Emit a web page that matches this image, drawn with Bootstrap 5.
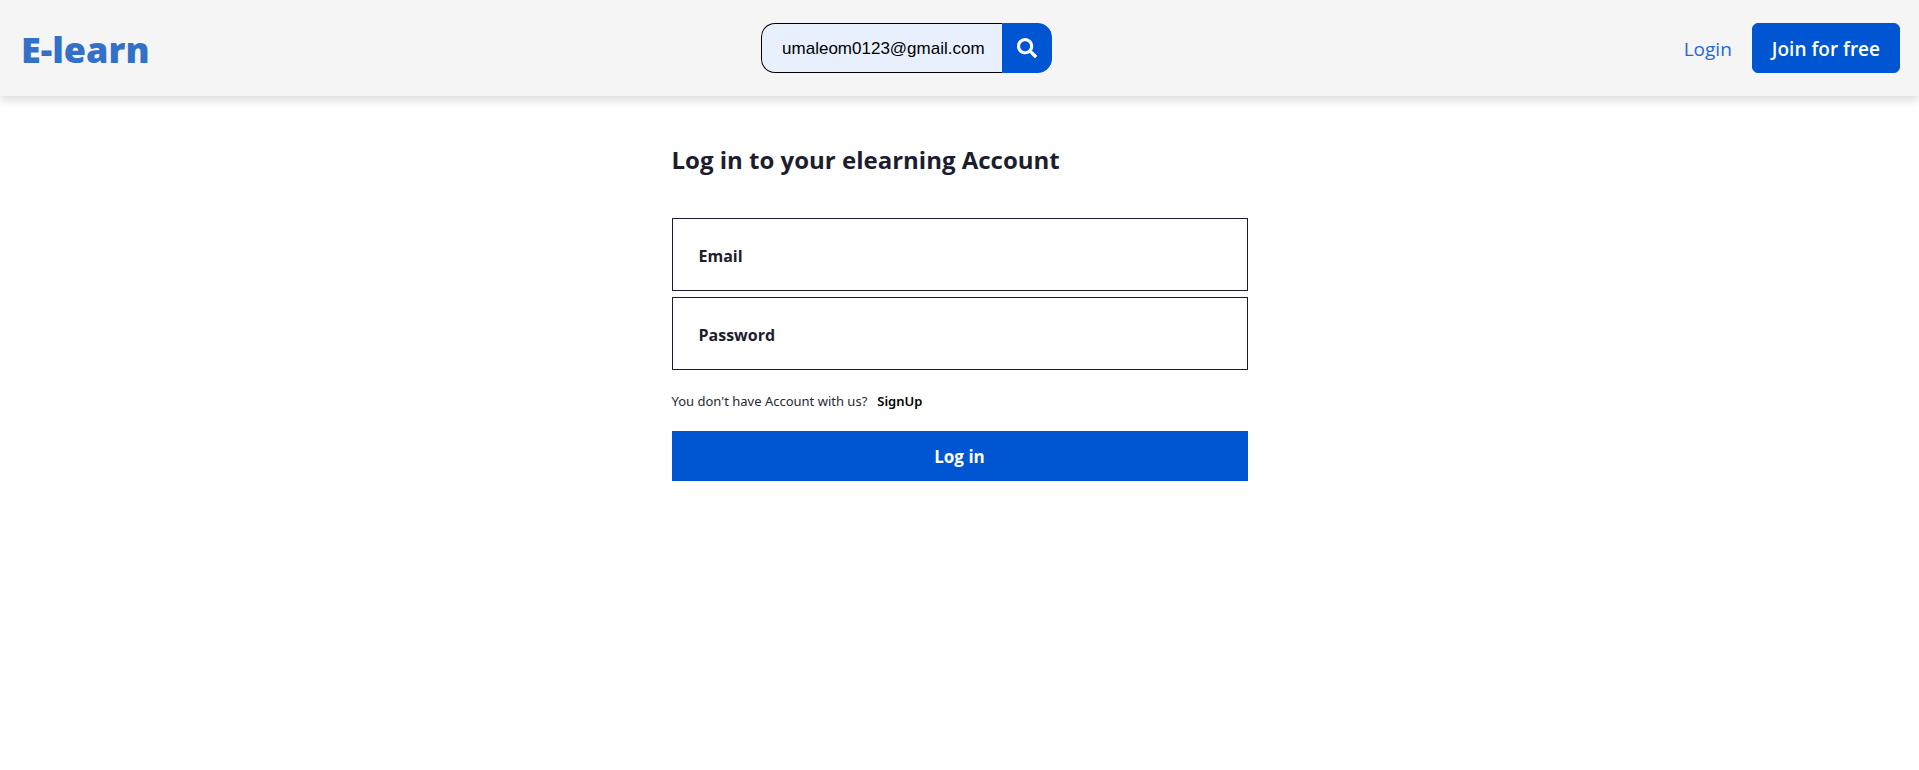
<!DOCTYPE html>
<html lang="en">
<head>
<meta charset="utf-8">
<meta name="viewport" content="width=device-width, initial-scale=1">
<title>E-learn | Log in</title>
<link href="https://cdn.jsdelivr.net/npm/bootstrap@5.3.0/dist/css/bootstrap.min.css" rel="stylesheet">
<style>
  :root { --brand: #0056d2; --ink: #1c1d2f; }
  body { font-family: "Segoe UI", "Open Sans", "Noto Sans", sans-serif; color: #1f2937; }
  .site-header { min-height: 96px; padding: 0 19px 0 21px; background: #f5f5f5; box-shadow: 0 4px 10px rgba(0, 0, 0, .15); }
  .brand { padding-top: 4px; font-size: 36px; font-weight: 800; line-height: 40px; color: #3370c8; }
  .search-input { width: 241px; height: 50px; padding: 2px 10px 0 20px; border: 1px solid #000; border-right: 0; border-radius: 14px 0 0 14px; background: #e8f0fe; color: #000; font: 17px "Liberation Sans", Arial, sans-serif; }
  .search-btn { width: 50px; height: 50px; border-radius: 0 14px 14px 0; }
  .brand-btn { --bs-btn-color: #fff; --bs-btn-bg: var(--brand); --bs-btn-border-color: var(--brand); --bs-btn-hover-color: #fff; --bs-btn-hover-bg: #00419e; --bs-btn-hover-border-color: #00419e; }
  .login-link { padding: 2px 20px 0; font-size: 19px; color: #2468d6; }
  .join-btn { height: 50px; padding: 2px 19px 0; font-size: 19px; font-weight: 600; border-radius: 6px; }
  .login-form { max-width: 576px; padding-top: 46px; }
  .login-title { margin-bottom: 40px; font-size: 24px; line-height: 36px; font-weight: 700; color: var(--ink); }
  .field { height: 73px; padding: 2px 26px 0; margin-bottom: 6px; border: 1px solid var(--ink); }
  .field label { font-size: 16px; font-weight: 700; color: var(--ink); }
  .field input { min-width: 0; height: 100%; outline: 0; }
  .field:focus-within { border-color: var(--brand); }
  .signup-line { margin: 21px 0 19px; font-family: "Segoe UI", "Noto Sans", sans-serif; font-size: 13px; line-height: 21px; }
  .signup-line a { margin-left: 10px; font-weight: 600; color: #000; }
  .submit-btn { height: 50px; padding: 2px 0 0; font-size: 17px; font-weight: 700; }
</style>
</head>
<body>
<header class="site-header d-flex flex-wrap align-items-center justify-content-between">
  <a class="brand text-decoration-none" href="#">E-learn</a>
  <form class="d-flex" role="search">
    <input class="search-input" type="text" aria-label="Search" value="umaleom0123@gmail.com">
    <button class="btn brand-btn search-btn p-0 d-flex align-items-center justify-content-center" type="button" aria-label="Search">
      <svg width="20" height="20" viewBox="0 0 512 512" fill="currentColor" aria-hidden="true"><path d="M505 442.700 405.300 343c-4.500-4.500-10.600-7-17-7H372c27.600-35.300 44-79.700 44-128C416 93.100 322.900 0 208 0S0 93.100 0 208s93.100 208 208 208c48.300 0 92.700-16.400 128-44v16.300c0 6.400 2.500 12.500 7 17l99.700 99.700c9.400 9.400 24.600 9.400 33.900 0l28.300-28.300c9.400-9.400 9.400-24.600.1-34zM208 336c-70.700 0-128-57.200-128-128 0-70.700 57.200-128 128-128 70.700 0 128 57.200 128 128 0 70.700-57.200 128-128 128z"/></svg>
    </button>
  </form>
  <div class="d-flex align-items-center">
    <a class="login-link text-decoration-none" href="#">Login</a>
    <button class="btn brand-btn join-btn" type="button">Join for free</button>
  </div>
</header>
<main>
  <form class="login-form mx-auto">
    <h1 class="login-title">Log in to your elearning Account</h1>
    <div class="field d-flex align-items-center">
      <label for="email">Email</label>
      <input class="flex-fill border-0 bg-transparent" type="email" id="email">
    </div>
    <div class="field d-flex align-items-center">
      <label for="password">Password</label>
      <input class="flex-fill border-0 bg-transparent" type="password" id="password">
    </div>
    <p class="signup-line">You don't have Account with us?<a class="text-decoration-none" href="#">SignUp</a></p>
    <button class="btn brand-btn submit-btn w-100 rounded-0" type="button">Log in</button>
  </form>
</main>
<script src="https://cdn.jsdelivr.net/npm/bootstrap@5.3.0/dist/js/bootstrap.bundle.min.js"></script>
</body>
</html>
